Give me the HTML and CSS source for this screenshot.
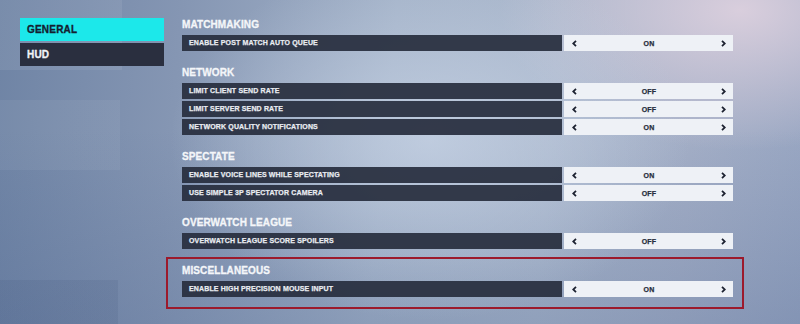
FILE: index.html
```html
<!DOCTYPE html>
<html>
<head>
<meta charset="utf-8">
<link rel="stylesheet" href="styles.css">
</head>
<body>
<div class="page">
  <nav class="sidebar">
    <div class="tab tab-active">GENERAL</div>
    <div class="tab">HUD</div>
  </nav>
  <main class="settings">
    <section class="group">
      <h2 class="heading">MATCHMAKING</h2>
      <div class="row"><div class="label">ENABLE POST MATCH AUTO QUEUE</div><div class="value"><svg class="arrow" viewBox="0 0 5 7"><polyline points="4,0.8 1.2,3.5 4,6.2"/></svg><span>ON</span><svg class="arrow" viewBox="0 0 5 7"><polyline points="1,0.8 3.8,3.5 1,6.2"/></svg></div></div>
    </section>
    <section class="group">
      <h2 class="heading">NETWORK</h2>
      <div class="row"><div class="label">LIMIT CLIENT SEND RATE</div><div class="value"><svg class="arrow" viewBox="0 0 5 7"><polyline points="4,0.8 1.2,3.5 4,6.2"/></svg><span>OFF</span><svg class="arrow" viewBox="0 0 5 7"><polyline points="1,0.8 3.8,3.5 1,6.2"/></svg></div></div>
      <div class="row"><div class="label">LIMIT SERVER SEND RATE</div><div class="value"><svg class="arrow" viewBox="0 0 5 7"><polyline points="4,0.8 1.2,3.5 4,6.2"/></svg><span>OFF</span><svg class="arrow" viewBox="0 0 5 7"><polyline points="1,0.8 3.8,3.5 1,6.2"/></svg></div></div>
      <div class="row"><div class="label">NETWORK QUALITY NOTIFICATIONS</div><div class="value"><svg class="arrow" viewBox="0 0 5 7"><polyline points="4,0.8 1.2,3.5 4,6.2"/></svg><span>ON</span><svg class="arrow" viewBox="0 0 5 7"><polyline points="1,0.8 3.8,3.5 1,6.2"/></svg></div></div>
    </section>
    <section class="group">
      <h2 class="heading">SPECTATE</h2>
      <div class="row"><div class="label">ENABLE VOICE LINES WHILE SPECTATING</div><div class="value"><svg class="arrow" viewBox="0 0 5 7"><polyline points="4,0.8 1.2,3.5 4,6.2"/></svg><span>ON</span><svg class="arrow" viewBox="0 0 5 7"><polyline points="1,0.8 3.8,3.5 1,6.2"/></svg></div></div>
      <div class="row"><div class="label">USE SIMPLE 3P SPECTATOR CAMERA</div><div class="value"><svg class="arrow" viewBox="0 0 5 7"><polyline points="4,0.8 1.2,3.5 4,6.2"/></svg><span>OFF</span><svg class="arrow" viewBox="0 0 5 7"><polyline points="1,0.8 3.8,3.5 1,6.2"/></svg></div></div>
    </section>
    <section class="group">
      <h2 class="heading">OVERWATCH LEAGUE</h2>
      <div class="row"><div class="label">OVERWATCH LEAGUE SCORE SPOILERS</div><div class="value"><svg class="arrow" viewBox="0 0 5 7"><polyline points="4,0.8 1.2,3.5 4,6.2"/></svg><span>OFF</span><svg class="arrow" viewBox="0 0 5 7"><polyline points="1,0.8 3.8,3.5 1,6.2"/></svg></div></div>
    </section>
    <section class="group group-highlight">
      <h2 class="heading">MISCELLANEOUS</h2>
      <div class="row"><div class="label">ENABLE HIGH PRECISION MOUSE INPUT</div><div class="value"><svg class="arrow" viewBox="0 0 5 7"><polyline points="4,0.8 1.2,3.5 4,6.2"/></svg><span>ON</span><svg class="arrow" viewBox="0 0 5 7"><polyline points="1,0.8 3.8,3.5 1,6.2"/></svg></div></div>
    </section>
  </main>
</div>
</body>
</html>
```

FILE: styles.css
```css
html, body {
  margin: 0;
  padding: 0;
}

body {
  width: 800px;
  height: 324px;
  overflow: hidden;
  font-family: "Liberation Sans", Arial, sans-serif;
  background:
    linear-gradient(180deg, rgba(255,255,255,0.07) 0px, rgba(255,255,255,0.07) 70px, transparent 70px) 0 0 / 122px 324px no-repeat,
    linear-gradient(180deg, rgba(255,255,255,0.05) 0px, rgba(255,255,255,0.05) 70px, transparent 70px) 0 100px / 120px 324px no-repeat,
    linear-gradient(180deg, rgba(40,60,100,0.10) 0px, rgba(40,60,100,0.10) 60px) 0 280px / 118px 60px no-repeat,
    radial-gradient(ellipse 260px 180px at 430px 140px, rgba(200,212,230,0.75), rgba(200,212,230,0) 100%),
    radial-gradient(ellipse 240px 140px at 740px 10px, rgba(220,208,222,0.95), rgba(220,208,222,0) 100%),
    linear-gradient(180deg, rgba(70,95,140,0) 40%, rgba(70,95,140,0.25) 100%),
    linear-gradient(95deg, #6f84a5 0%, #8596b3 22%, #a3b2c8 48%, #a9b6cb 68%, #a3aec6 85%, #98a6c2 100%);
}

.page {
  display: flex;
  gap: 18px;
  padding-left: 20px;
}

.sidebar {
  width: 144px;
  display: flex;
  flex-direction: column;
  gap: 2px;
  padding-top: 18px;
}

.tab {
  height: 23px;
  line-height: 23px;
  padding-left: 7px;
  font-size: 10px;
  font-weight: bold;
  letter-spacing: 0.2px;
  color: #f2f4f7;
  background: #2a2f3f;
  -webkit-text-stroke: 0.3px currentColor;
}

.tab-active {
  background: #1ce8ea;
  color: #142030;
}

.settings {
  width: 551px;
  padding-top: 19px;
  display: flex;
  flex-direction: column;
}

.group {
  display: flex;
  flex-direction: column;
  gap: 2px;
  margin-top: 16px;
}

.group:first-child {
  margin-top: 0;
}

.heading {
  margin: 0 0 2px 0;
  height: 12px;
  line-height: 12px;
  font-size: 10px;
  font-weight: bold;
  color: #f4f6f9;
  letter-spacing: 0.1px;
  -webkit-text-stroke: 0.3px currentColor;
}

.group-highlight {
  margin: 8px -11px 0 -16px;
  padding: 6px 9px 10px 14px;
  border: 2px solid #9c1a2c;
}

.row {
  display: flex;
  gap: 2px;
  height: 16px;
}

.label {
  width: 380px;
  padding-left: 7px;
  box-sizing: border-box;
  background: rgba(40, 46, 62, 0.93);
  color: #e9ecf1;
  font-size: 7px;
  font-weight: bold;
  letter-spacing: 0.15px;
  line-height: 16px;
  white-space: nowrap;
  -webkit-text-stroke: 0.25px currentColor;
}

.value {
  flex: 1;
  display: flex;
  align-items: center;
  justify-content: space-between;
  padding: 0 7px 0 8px;
  background: #eef1f6;
  color: #262d3d;
  font-size: 7px;
  font-weight: bold;
  letter-spacing: 0.2px;
  -webkit-text-stroke: 0.25px currentColor;
}

.arrow {
  width: 5px;
  height: 7px;
  fill: none;
  stroke: #1d2231;
  stroke-width: 1.8;
}
```
